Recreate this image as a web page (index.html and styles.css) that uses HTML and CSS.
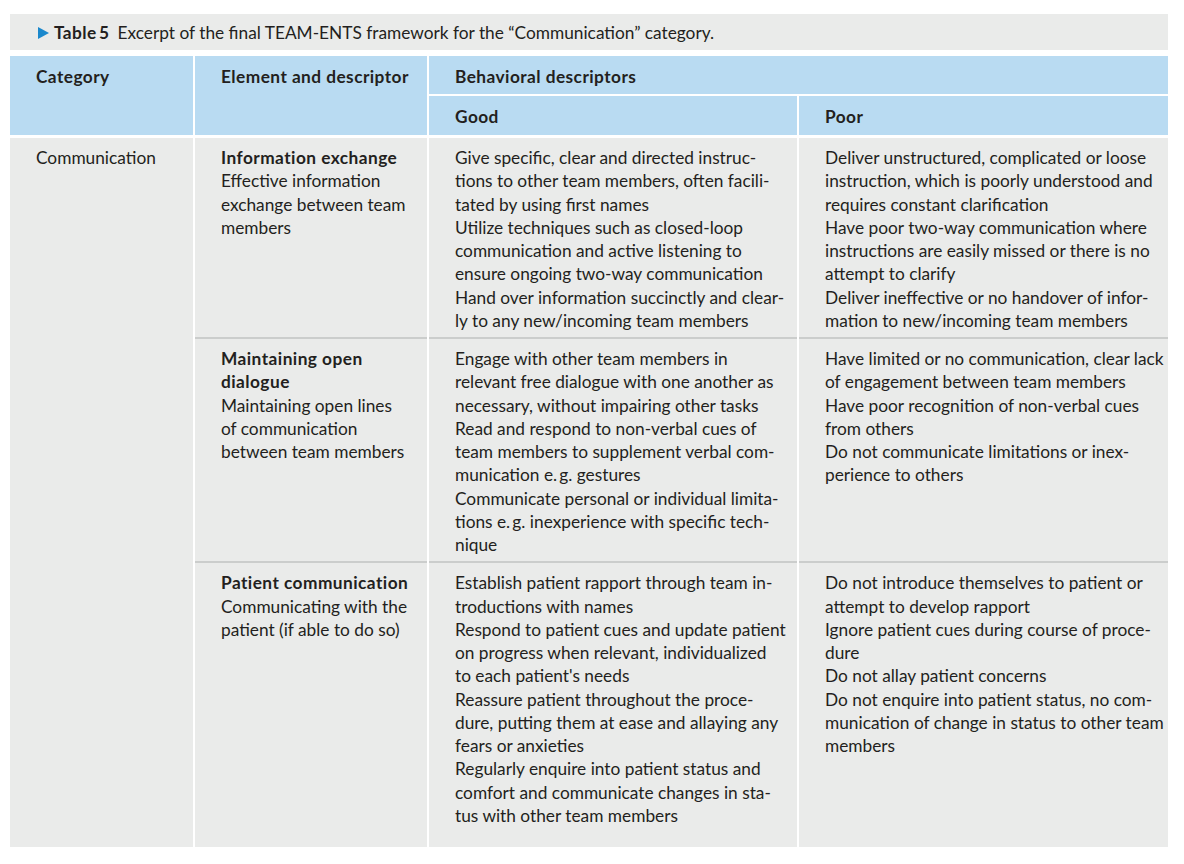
FILE: index.html
```html
<!DOCTYPE html>
<html lang="en">
<head>
<meta charset="utf-8">
<title>Table 5</title>
<link rel="stylesheet" href="styles.css">
</head>
<body>
<div class="wrap">
  <div class="caption">
    <svg class="tri" width="11" height="12" viewBox="0 0 11 12"><polygon points="0,0 11,6 0,12" fill="#1b88cc"/></svg>
    <span class="cap-label">Table&#8201;5</span>
    <span class="cap-text">Excerpt of the final TEAM-ENTS framework for the “Communication” category.</span>
  </div>
  <div class="grid">
    <div class="th h-cat">Category</div>
    <div class="th h-el">Element and descriptor</div>
    <div class="th h-beh">Behavioral descriptors</div>
    <div class="th h-good">Good</div>
    <div class="th h-poor">Poor</div>

    <div class="td c-cat">Communication</div>

    <div class="td r1 c2 sep"><b>Information exchange</b><br>Effective information<br>exchange between team<br>members</div>
    <div class="td r1 c3 sep">Give specific, clear and directed instruc-<br>tions to other team members, often facili-<br>tated by using first names<br>Utilize techniques such as closed-loop<br>communication and active listening to<br>ensure ongoing two-way communication<br>Hand over information succinctly and clear-<br>ly to any new/incoming team members</div>
    <div class="td r1 c4 sep">Deliver unstructured, complicated or loose<br>instruction, which is poorly understood and<br>requires constant clarification<br>Have poor two-way communication where<br>instructions are easily missed or there is no<br>attempt to clarify<br>Deliver ineffective or no handover of infor-<br>mation to new/incoming team members</div>

    <div class="td r2 c2 sep"><b>Maintaining open<br>dialogue</b><br>Maintaining open lines<br>of communication<br>between team members</div>
    <div class="td r2 c3 sep">Engage with other team members in<br>relevant free dialogue with one another as<br>necessary, without impairing other tasks<br>Read and respond to non-verbal cues of<br>team members to supplement verbal com-<br>munication e.&#8201;g. gestures<br>Communicate personal or individual limita-<br>tions e.&#8201;g. inexperience with specific tech-<br>nique</div>
    <div class="td r2 c4 sep">Have limited or no communication, clear lack<br>of engagement between team members<br>Have poor recognition of non-verbal cues<br>from others<br>Do not communicate limitations or inex-<br>perience to others</div>

    <div class="td r3 c2 last"><b>Patient communication</b><br>Communicating with the<br>patient (if able to do so)</div>
    <div class="td r3 c3 last">Establish patient rapport through team in-<br>troductions with names<br>Respond to patient cues and update patient<br>on progress when relevant, individualized<br>to each patient's needs<br>Reassure patient throughout the proce-<br>dure, putting them at ease and allaying any<br>fears or anxieties<br>Regularly enquire into patient status and<br>comfort and communicate changes in sta-<br>tus with other team members</div>
    <div class="td r3 c4 last">Do not introduce themselves to patient or<br>attempt to develop rapport<br>Ignore patient cues during course of proce-<br>dure<br>Do not allay patient concerns<br>Do not enquire into patient status, no com-<br>munication of change in status to other team<br>members</div>
  </div>
</div>
</body>
</html>
```
FILE: styles.css
```css
html, body {
  margin: 0;
  padding: 0;
  background: #ffffff;
}
body {
  font-family: Lato, "Open Sans", sans-serif;
  font-size: 17.3px;
  color: #231f20;
}
.wrap {
  width: 1158px;
  margin: 14px 0 0 10px;
}
.caption {
  height: 36px;
  background: #eaebea;
  display: flex;
  align-items: center;
  padding: 1px 0 0 28px;
  box-sizing: border-box;
  white-space: nowrap;
}
.tri {
  display: block;
  margin-right: 5px;
}
.cap-label {
  font-weight: 700;
  letter-spacing: 0.4px;
  margin-right: 8px;
}
.grid {
  margin-top: 6px;
  display: grid;
  grid-template-columns: 183px 232px 368px 369px;
  grid-template-rows: 38px 2px 39px 3px auto auto auto;
  column-gap: 2px;
  background: #ffffff;
  line-height: 23.25px;
}
.th {
  background: #b9dbf2;
  font-weight: 700;
  letter-spacing: 0.44px;
  padding: 9px 26px 0 26px;
  white-space: nowrap;
}
.h-cat { grid-column: 1; grid-row: 1 / 4; }
.h-el { grid-column: 2; grid-row: 1 / 4; }
.h-beh { grid-column: 3 / 5; grid-row: 1; }
.h-good { grid-column: 3; grid-row: 3; padding-top: 9px; }
.h-poor { grid-column: 4; grid-row: 3; padding-top: 9px; }

.td {
  background: #eaebea;
  padding: 8px 0 5px 26px;
  white-space: nowrap;
}
.td b {
  font-weight: 700;
  letter-spacing: 0.45px;
}
.c-cat { grid-column: 1; grid-row: 5 / 8; }
.c2 { grid-column: 2; }
.c3 { grid-column: 3; }
.c4 { grid-column: 4; }
.r1 { grid-row: 5; }
.r2 { grid-row: 6; }
.r3 { grid-row: 7; }
.sep { border-bottom: 2px solid #cbcdcc; }
.last { padding-bottom: 20px; }
```
